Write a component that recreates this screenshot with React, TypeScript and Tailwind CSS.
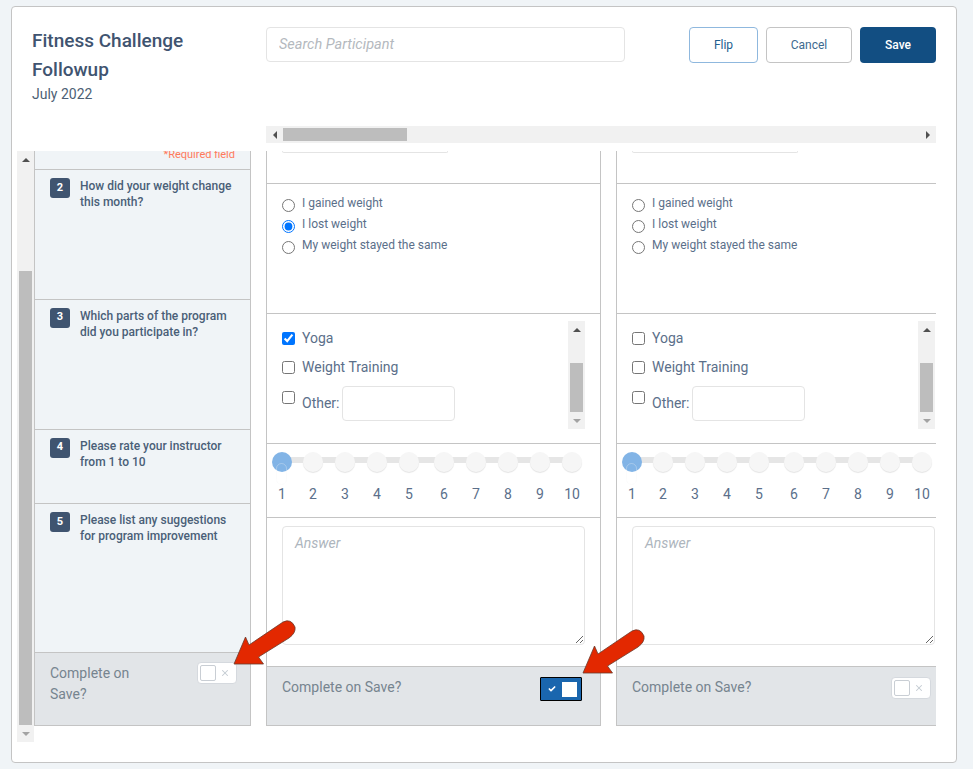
import { Check, X } from "lucide-react";

const font = { fontFamily: "Roboto, sans-serif" };

const questions = [
  { n: 2, text: ["How did your weight change", "this month?"], h: "h-[130px]" },
  { n: 3, text: ["Which parts of the program", "did you participate in?"], h: "h-[130px]" },
  { n: 4, text: ["Please rate your instructor", "from 1 to 10"], h: "h-[75px]" },
  { n: 5, text: ["Please list any suggestions", "for program improvement"], h: "h-[149px]" },
];

function Arrow({ className }: { className: string }) {
  return (
    <svg className={className} width="66" height="50" viewBox="0 0 66 50">
      <path
        d="M1 46 L12.5 19 L16 27 L50 4 Q58 0 62 9 Q63 15 56 20 L25.5 39 L30.5 46 Z"
        fill="#e32800"
        stroke="#6b3a2c"
        strokeWidth="0.8"
      />
    </svg>
  );
}

function Toggle({ on, className = "" }: { on?: boolean; className?: string }) {
  if (on) {
    return (
      <div className={`flex h-[24px] w-[42px] items-center justify-between rounded-[1px] border border-black bg-[#1a66ae] pl-[7px] pr-[4px] ${className}`}>
        <Check size={8} strokeWidth={5} className="text-white" />
        <div className="h-[15px] w-[15px] bg-white" />
      </div>
    );
  }
  return (
    <div className={`flex h-[22px] w-[40px] items-center justify-between rounded-[4px] border border-[#d5d9de] bg-white pl-[2px] pr-[6px] ${className}`}>
      <div className="h-[16px] w-[16px] rounded-[2px] border border-[#c9ced4] bg-white" />
      <X size={10} strokeWidth={2.5} className="text-[#c5ccd3]" />
    </div>
  );
}

function ScrollArrow({ dir, dark }: { dir: "up" | "down" | "left" | "right"; dark?: boolean }) {
  const d = { up: "M0 6 L4 2 L8 6 Z", down: "M0 2 L8 2 L4 6 Z", left: "M6 0 L6 8 L2 4 Z", right: "M2 0 L2 8 L6 4 Z" }[dir];
  return (
    <svg width="8" height="8" viewBox="0 0 8 8">
      <path d={d} fill={dark ? "#505050" : "#a3a3a3"} />
    </svg>
  );
}

const sliderValues = [1, 2, 3, 4, 5, 6, 7, 8, 9, 10];

function AnswerColumn({ first }: { first?: boolean }) {
  return (
    <div className="flex w-[335px] shrink-0 flex-col text-[#5b6f8a]">
      {/* cut off question 1 */}
      <div className="h-[33px] border-x border-b border-[#c4c4c4] px-[15px]">
        <div className="h-[2px] w-[166px] rounded-b-[4px] border-b border-x border-[#e4e4e4]" />
      </div>

      <div className="flex h-[130px] flex-col gap-[5px] border-x border-b border-[#c4c4c4] pl-[15px] pt-[11px] text-[12px] leading-[16px]">
        {["I gained weight", "I lost weight", "My weight stayed the same"].map((label, i) => (
          <label key={label} className="flex h-[16px] items-start gap-[7px]">
            <input type="radio" readOnly checked={first && i === 1} className="mt-[4px]" />
            <span>{label}</span>
          </label>
        ))}
      </div>

      <div className="flex h-[130px] border-x border-b border-[#c4c4c4] pl-[15px] pt-[7px]">
        <div className="flex w-[286px] flex-col pt-[7px] text-[14px] leading-[20px]">
          <label className="flex items-center gap-[7px]">
            <input type="checkbox" readOnly checked={first} />
            <span>Yoga</span>
          </label>
          <label className="mt-[9px] flex items-center gap-[7px]">
            <input type="checkbox" readOnly />
            <span>Weight Training</span>
          </label>
          <div className="mt-[9px] flex items-start gap-[7px]">
            <input type="checkbox" readOnly className="mt-[5px]" />
            <span className="mt-[7px]">Other:</span>
            <div className="-ml-[4px] h-[35px] w-[113px] rounded-[4px] border border-[#e4e4e4]" />
          </div>
        </div>
        <div className="flex h-[108px] w-[17px] flex-col items-center bg-[#f1f1f1]">
          <div className="flex h-[17px] items-center">
            <ScrollArrow dir="up" dark />
          </div>
          <div className="mt-[25px] h-[49px] w-[13px] bg-[#bdbdbd]" />
          <div className="flex h-[17px] items-center">
            <ScrollArrow dir="down" />
          </div>
        </div>
      </div>

      <div className="h-[74px] border-x border-b border-[#c4c4c4] pl-[5px] pt-[8px]">
        <div className="relative grid grid-cols-[31px_32px_32px_32px_35px_32px_32px_32px_32px_20px]">
          <div className="absolute left-[4px] top-[5px] h-[6px] w-[296px] rounded-full bg-[#e6e6e6]" />
          {sliderValues.map((v) => (
            <div key={v} className="relative flex w-[20px] flex-col items-center">
              <div className={`h-[20px] w-[20px] rounded-full ${v === 1 ? "bg-[#82b4e6]" : "bg-[#f6f6f6] shadow-[0_1px_1px_#e4e4e4]"}`} />
              <span className="mt-[12px] text-[14px] leading-[20px]">{v}</span>
            </div>
          ))}
          <div className="absolute left-[4px] top-[11px] h-[22px] w-[11px] rounded-full border border-[#f4f4f4]/30" />
        </div>
      </div>

      <div className="h-[149px] border-x border-b border-[#c4c4c4] px-[15px] pt-[8px]">
        <textarea
          readOnly
          placeholder="Answer"
          className="block h-[119px] w-[303px] rounded-[4px] border border-[#e4e4e4] px-[12px] py-[6px] text-[14px] italic leading-[20px] placeholder:text-[#adb5bd]"
        />
      </div>

      <div className="flex h-[59px] items-start justify-between border-x border-b border-[#c4c4c4] bg-[#e2e5e8] pl-[15px] pr-[18px] pt-[10px] text-[14px] leading-[20px] text-[#76848f]">
        <span>Complete on Save?</span>
        {first ? <Toggle on /> : <Toggle className="mr-[1px]" />}
      </div>
    </div>
  );
}

export default function App() {
  return (
    <div className="relative h-[769px] w-[973px] overflow-hidden bg-[#f0f4f7] px-[11px] pt-[6px]" style={font}>
      <div className="h-[757px] w-[946px] rounded-[4px] border border-[#c4c4c4] bg-white">
        {/* Header */}
        <div className="flex h-[144px]">
          <div className="w-[254px] pl-[20px] pt-[19px]">
            <h1 className="text-[19px] font-medium leading-[29px] text-[#3f5470]">
              Fitness Challenge
              <br />
              Followup
            </h1>
            <p className="text-[14px] leading-[20px] text-[#4d5f75]">July 2022</p>
          </div>
          <div className="w-[670px] pt-[20px]">
            <div className="flex items-start">
              <input
                readOnly
                placeholder="Search Participant"
                className="h-[35px] w-[359px] rounded-[4px] border border-[#e4e4e4] px-[12px] text-[14.5px] italic placeholder:text-[#b4b9be]"
              />
              <div className="ml-auto flex gap-[8px] text-[12px]">
                <button className="h-[36px] w-[69px] rounded-[4px] border border-[#8fb8de] text-[#22608f]">Flip</button>
                <button className="h-[36px] w-[86px] rounded-[4px] border border-[#c4c4c4] text-[#3d6a8f]">Cancel</button>
                <button className="h-[36px] w-[76px] rounded-[4px] bg-[#124e82] font-medium text-white">Save</button>
              </div>
            </div>
            {/* horizontal scrollbar */}
            <div className="mt-[63px] flex h-[17px] items-center bg-[#f1f1f1]">
              <div className="flex w-[17px] justify-center">
                <ScrollArrow dir="left" dark />
              </div>
              <div className="h-[13px] w-[124px] bg-[#bdbdbd]" />
              <div className="ml-auto flex w-[17px] justify-center">
                <ScrollArrow dir="right" dark />
              </div>
            </div>
          </div>
        </div>

        {/* Form body */}
        <div className="flex h-[591px] overflow-hidden pl-[5px]">
          <div className="flex h-[591px] w-[17px] shrink-0 flex-col items-center bg-[#f1f1f1]">
            <div className="flex h-[17px] items-center">
              <ScrollArrow dir="up" dark />
            </div>
            <div className="mt-[103px] h-[454px] w-[13px] bg-[#bdbdbd]" />
            <div className="flex h-[17px] items-center">
              <ScrollArrow dir="down" />
            </div>
          </div>

          <div className="flex h-[575px] w-[902px] shrink-0 gap-[15px] overflow-hidden">
            {/* Question column */}
            <div className="flex w-[217px] shrink-0 flex-col">
              <div className="h-[19px] border-x border-b border-[#c4c4c4] bg-[#f0f4f7] pr-[15px] text-right text-[11px] leading-[7px] text-[#ff7a5c]">
                *Required field
              </div>
              {questions.map((q) => (
                <div key={q.n} className={`flex gap-[10px] border-x border-b border-[#c4c4c4] bg-[#f0f4f7] pl-[15px] pt-[8px] ${q.h}`}>
                  <div className="flex h-[20px] w-[20px] items-center justify-center rounded-[3px] bg-[#3f5470] text-[11px] font-bold text-white">
                    {q.n}
                  </div>
                  <p className="text-[12px] font-medium leading-[16px] text-[#4a5f78]">
                    {q.text[0]}
                    <br />
                    {q.text[1]}
                  </p>
                </div>
              ))}
              <div className="flex h-[73px] items-start justify-between border-x border-b border-[#c4c4c4] bg-[#e2e5e8] pl-[15px] pr-[13px] pt-[10px] text-[14px] leading-[21px] text-[#76848f]">
                <span>
                  Complete on
                  <br />
                  Save?
                </span>
                <Toggle className="-mt-px" />
              </div>
            </div>

            <AnswerColumn first />
            <AnswerColumn />
          </div>
        </div>
      </div>

      <Arrow className="absolute left-[233px] top-[618px]" />
      <Arrow className="absolute left-[582px] top-[627px]" />
    </div>
  );
}
